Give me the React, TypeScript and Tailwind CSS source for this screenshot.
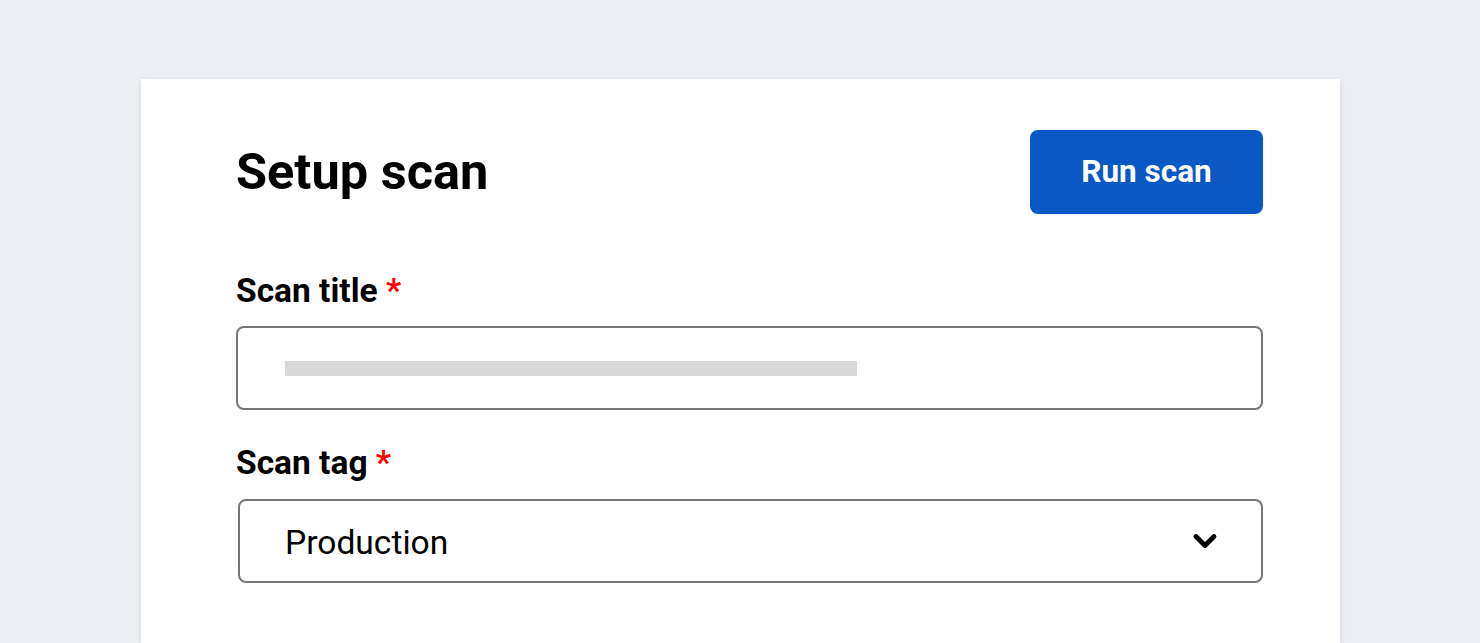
import { ChevronDown } from "lucide-react";

export default function App() {
  return (
    <div className="h-[643px] w-full bg-[#ebeef3] pt-[79px] pl-[141px] pr-[140px] overflow-hidden [font-family:Roboto,'Liberation_Sans',sans-serif]">
      <div className="bg-white h-[564px] pt-[51px] pl-[95px] pr-[77px] shadow-[0_2px_6px_rgba(0,0,0,0.12)]">
        {/* header */}
        <div className="flex items-center justify-between">
          <h1 className="text-[50.5px] leading-[60px] font-bold text-black">Setup scan</h1>
          <button className="w-[233px] h-[84px] rounded-[8px] bg-[#0a58c4] text-white text-[31.5px] font-bold">
            Run scan
          </button>
        </div>

        {/* Scan title */}
        <label className="block mt-[57px] text-[33.5px] leading-[40px] font-bold text-black">
          Scan title <span className="text-[#ff0000]">*</span>
        </label>
        <div className="mt-[15px] h-[84px] rounded-[8px] border-2 border-[#777777] flex items-center pl-[47px]">
          <div className="w-[572px] h-[15px] bg-[#d9d9d9]" />
        </div>

        {/* Scan tag */}
        <label className="block mt-[33px] text-[33.5px] leading-[40px] font-bold text-black">
          Scan tag <span className="text-[#ff0000]">*</span>
        </label>
        <div className="mt-[16px] ml-[2px] h-[84px] rounded-[8px] border-2 border-[#777777] flex items-center justify-between pl-[45px] pr-[38px]">
          <span className="text-[33.6px] leading-[40px] pt-[4px] text-black">Production</span>
          <ChevronDown size={36} strokeWidth={3.2} className="text-black" />
        </div>
      </div>
    </div>
  );
}
